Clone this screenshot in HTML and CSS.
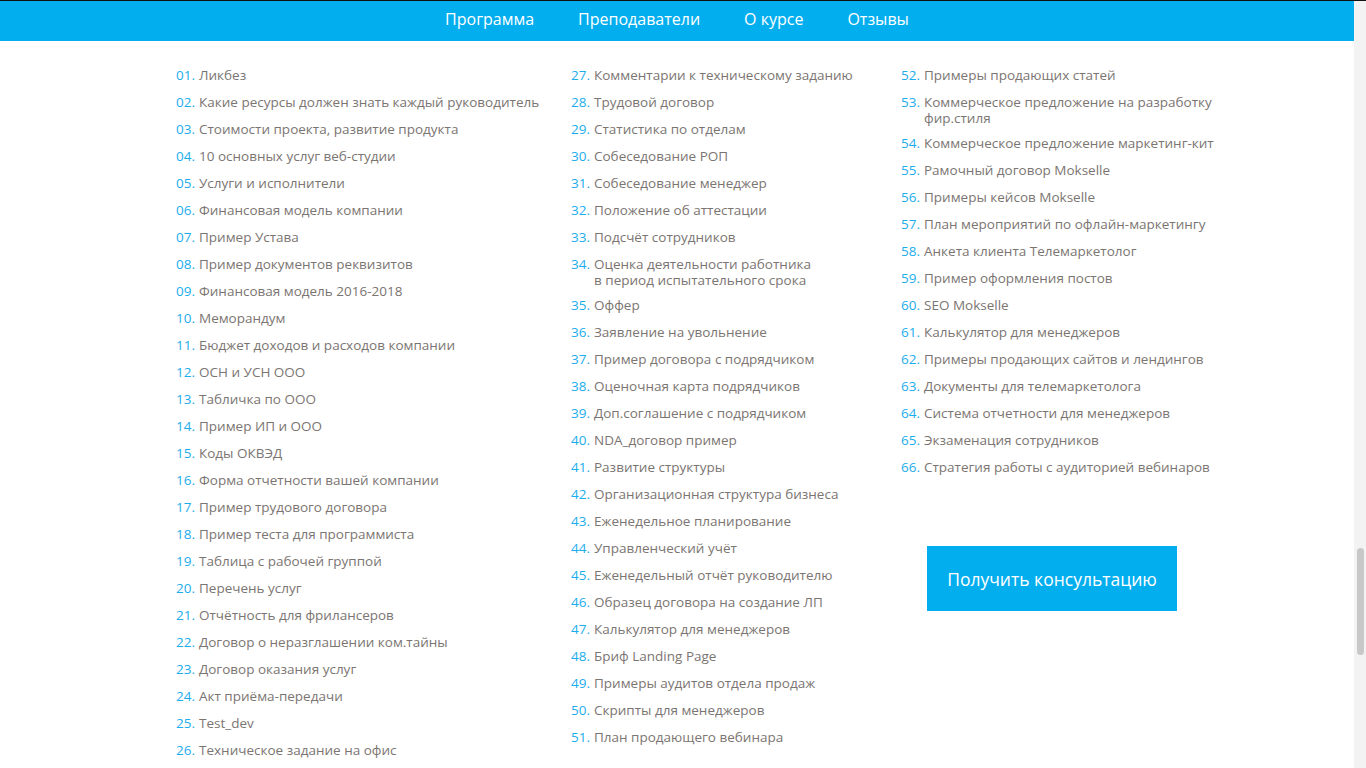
FILE: index.html
```html
<!DOCTYPE html>
<html lang="ru">
<head>
<meta charset="utf-8">
<title>Программа</title>
<link rel="stylesheet" href="styles.css">
</head>
<body>
<div class="topline"></div>
<div class="page">
  <div class="main">
    <nav class="nav">
      <a href="#">Программа</a>
      <a href="#">Преподаватели</a>
      <a href="#">О курсе</a>
      <a href="#">Отзывы</a>
    </nav>
    <div class="columns">
      <ul class="list col1">
        <li><span class="n">01.</span><span class="t">Ликбез</span></li>
        <li><span class="n">02.</span><span class="t">Какие ресурсы должен знать каждый руководитель</span></li>
        <li><span class="n">03.</span><span class="t">Стоимости проекта, развитие продукта</span></li>
        <li><span class="n">04.</span><span class="t">10 основных услуг веб-студии</span></li>
        <li><span class="n">05.</span><span class="t">Услуги и исполнители</span></li>
        <li><span class="n">06.</span><span class="t">Финансовая модель компании</span></li>
        <li><span class="n">07.</span><span class="t">Пример Устава</span></li>
        <li><span class="n">08.</span><span class="t">Пример документов реквизитов</span></li>
        <li><span class="n">09.</span><span class="t">Финансовая модель 2016-2018</span></li>
        <li><span class="n">10.</span><span class="t">Меморандум</span></li>
        <li><span class="n">11.</span><span class="t">Бюджет доходов и расходов компании</span></li>
        <li><span class="n">12.</span><span class="t">ОСН и УСН ООО</span></li>
        <li><span class="n">13.</span><span class="t">Табличка по ООО</span></li>
        <li><span class="n">14.</span><span class="t">Пример ИП и ООО</span></li>
        <li><span class="n">15.</span><span class="t">Коды ОКВЭД</span></li>
        <li><span class="n">16.</span><span class="t">Форма отчетности вашей компании</span></li>
        <li><span class="n">17.</span><span class="t">Пример трудового договора</span></li>
        <li><span class="n">18.</span><span class="t">Пример теста для программиста</span></li>
        <li><span class="n">19.</span><span class="t">Таблица с рабочей группой</span></li>
        <li><span class="n">20.</span><span class="t">Перечень услуг</span></li>
        <li><span class="n">21.</span><span class="t">Отчётность для фрилансеров</span></li>
        <li><span class="n">22.</span><span class="t">Договор о неразглашении ком.тайны</span></li>
        <li><span class="n">23.</span><span class="t">Договор оказания услуг</span></li>
        <li><span class="n">24.</span><span class="t">Акт приёма-передачи</span></li>
        <li><span class="n">25.</span><span class="t">Test_dev</span></li>
        <li><span class="n">26.</span><span class="t">Техническое задание на офис</span></li>
      </ul>
      <ul class="list col2">
        <li><span class="n">27.</span><span class="t">Комментарии к техническому заданию</span></li>
        <li><span class="n">28.</span><span class="t">Трудовой договор</span></li>
        <li><span class="n">29.</span><span class="t">Статистика по отделам</span></li>
        <li><span class="n">30.</span><span class="t">Собеседование РОП</span></li>
        <li><span class="n">31.</span><span class="t">Собеседование менеджер</span></li>
        <li><span class="n">32.</span><span class="t">Положение об аттестации</span></li>
        <li><span class="n">33.</span><span class="t">Подсчёт сотрудников</span></li>
        <li class="two"><span class="n">34.</span><span class="t">Оценка деятельности работника<br>в период испытательного срока</span></li>
        <li><span class="n">35.</span><span class="t">Оффер</span></li>
        <li><span class="n">36.</span><span class="t">Заявление на увольнение</span></li>
        <li><span class="n">37.</span><span class="t">Пример договора с подрядчиком</span></li>
        <li><span class="n">38.</span><span class="t">Оценочная карта подрядчиков</span></li>
        <li><span class="n">39.</span><span class="t">Доп.соглашение с подрядчиком</span></li>
        <li><span class="n">40.</span><span class="t">NDA_договор пример</span></li>
        <li><span class="n">41.</span><span class="t">Развитие структуры</span></li>
        <li><span class="n">42.</span><span class="t">Организационная структура бизнеса</span></li>
        <li><span class="n">43.</span><span class="t">Еженедельное планирование</span></li>
        <li><span class="n">44.</span><span class="t">Управленческий учёт</span></li>
        <li><span class="n">45.</span><span class="t">Еженедельный отчёт руководителю</span></li>
        <li><span class="n">46.</span><span class="t">Образец договора на создание ЛП</span></li>
        <li><span class="n">47.</span><span class="t">Калькулятор для менеджеров</span></li>
        <li><span class="n">48.</span><span class="t">Бриф Landing Page</span></li>
        <li><span class="n">49.</span><span class="t">Примеры аудитов отдела продаж</span></li>
        <li><span class="n">50.</span><span class="t">Скрипты для менеджеров</span></li>
        <li><span class="n">51.</span><span class="t">План продающего вебинара</span></li>
      </ul>
      <div class="col3">
        <ul class="list">
          <li><span class="n">52.</span><span class="t">Примеры продающих статей</span></li>
          <li class="two"><span class="n">53.</span><span class="t">Коммерческое предложение на разработку<br>фир.стиля</span></li>
          <li><span class="n">54.</span><span class="t">Коммерческое предложение маркетинг-кит</span></li>
          <li><span class="n">55.</span><span class="t">Рамочный договор Mokselle</span></li>
          <li><span class="n">56.</span><span class="t">Примеры кейсов Mokselle</span></li>
          <li><span class="n">57.</span><span class="t">План мероприятий по офлайн-маркетингу</span></li>
          <li><span class="n">58.</span><span class="t">Анкета клиента Телемаркетолог</span></li>
          <li><span class="n">59.</span><span class="t">Пример оформления постов</span></li>
          <li><span class="n">60.</span><span class="t">SEO Mokselle</span></li>
          <li><span class="n">61.</span><span class="t">Калькулятор для менеджеров</span></li>
          <li><span class="n">62.</span><span class="t">Примеры продающих сайтов и лендингов</span></li>
          <li><span class="n">63.</span><span class="t">Документы для телемаркетолога</span></li>
          <li><span class="n">64.</span><span class="t">Система отчетности для менеджеров</span></li>
          <li><span class="n">65.</span><span class="t">Экзаменация сотрудников</span></li>
          <li><span class="n">66.</span><span class="t">Стратегия работы с аудиторией вебинаров</span></li>
        </ul>
        <a class="btn" href="#">Получить консультацию</a>
      </div>
    </div>
  </div>
  <div class="scrollbar"><div class="thumb"></div></div>
</div>
</body>
</html>
```

FILE: styles.css
```css
* { box-sizing: border-box; }
html, body { margin: 0; padding: 0; }
body {
  font-family: "Open Sans", "Noto Sans", sans-serif;
  background: #fff;
  overflow: hidden;
  height: 768px;
}
.topline { height: 1px; background: #111; }
.page { display: flex; height: 767px; }
.main { flex: 1; min-width: 0; }
.nav {
  height: 40px;
  padding-bottom: 4px;
  background: #03aeef;
  display: flex;
  justify-content: center;
  align-items: center;
  gap: 44px;
}
.nav a {
  color: #fff;
  text-decoration: none;
  font-size: 16px;
  line-height: 20px;
}
.columns {
  display: grid;
  grid-template-columns: 395px 330px 1fr;
  padding: 26px 0 0 175px;
}
.list { list-style: none; margin: 0; padding: 0; }
.list li {
  display: flex;
  font-size: 13.5px;
  line-height: 16px;
  margin-bottom: 11px;
  color: #7b7572;
}
.list li.two { margin-bottom: 9px; }
.list .n {
  width: 20px;
  flex: none;
  text-align: right;
  margin-right: 4px;
  color: #1cadec;
}
.btn {
  display: flex;
  align-items: center;
  justify-content: center;
  width: 250px;
  height: 65px;
  margin: 71px 0 0 27px;
  background: #03aeef;
  color: #fff;
  text-decoration: none;
  font-size: 17.5px;
}
.scrollbar {
  width: 12px;
  flex: none;
  background: #f3f3f3;
  padding-top: 547px;
}
.thumb {
  width: 7px;
  height: 107px;
  margin-left: 3px;
  border-radius: 4px;
  background: #c8c8c8;
}
```
